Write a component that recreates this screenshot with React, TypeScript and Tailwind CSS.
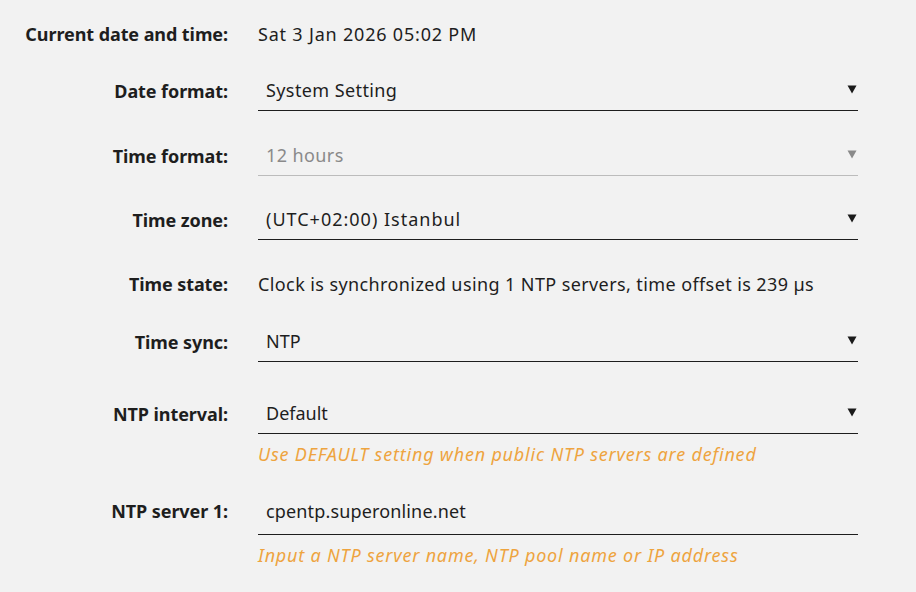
import React from "react";

const font = { fontFamily: '"Noto Sans", "Open Sans", sans-serif' };

function Arrow({ disabled }: { disabled?: boolean }) {
  return (
    <svg width="10" height="9" viewBox="0 0 10 9" className="mr-[1px]">
      <polygon points="0.5,0.5 9.5,0.5 5,8.5" fill={disabled ? "#8a8a8a" : "#1a1a1a"} />
    </svg>
  );
}

function Label({ children }: { children: React.ReactNode }) {
  return (
    <div className="w-[228px] shrink-0 text-right font-bold text-[18px] leading-6 text-[#1e1e1e] tracking-[-0.08px]">
      {children}
    </div>
  );
}

function SelectRow({
  label,
  value,
  disabled,
  className = "",
  valueClass = "tracking-[0.4px]",
}: {
  label: string;
  value: string;
  disabled?: boolean;
  className?: string;
  valueClass?: string;
}) {
  return (
    <div className={`flex items-center ${className}`}>
      <Label>{label}</Label>
      <div
        className={`ml-[30px] w-[600px] h-[41px] flex items-center justify-between pl-2 pb-[1px] border-b ${
          disabled ? "border-[#bcbcbc] text-[#8a8a8a]" : "border-[#1e1e1e] text-[#1e1e1e]"
        }`}
      >
        <span className={`text-[18px] leading-6 ${valueClass}`}>{value}</span>
        <Arrow disabled={disabled} />
      </div>
    </div>
  );
}

function Help({ children, className = "" }: { children: React.ReactNode; className?: string }) {
  return (
    <div className={`pl-[258px] text-[18px] leading-6 italic tracking-[0.8px] text-[#eea43f] ${className}`}>
      {children}
    </div>
  );
}

export default function App() {
  return (
    <div className="w-[916px] h-[592px] bg-[#f2f2f2] overflow-hidden" style={font}>
      <div className="flex flex-col pt-[22px]">
        {/* current date */}
        <div className="flex">
          <Label>Current date and time:</Label>
          <div className="ml-[30px] text-[18px] leading-6 tracking-[0.8px] text-[#1e1e1e]">
            Sat 3 Jan 2026 05:02 PM
          </div>
        </div>

        <SelectRow className="mt-6" label="Date format:" value="System Setting" />
        <SelectRow className="mt-6" label="Time format:" value="12 hours" disabled />
        <SelectRow
          className="mt-[23px]"
          label="Time zone:"
          value="(UTC+02:00) Istanbul"
          valueClass="tracking-[1px]"
        />

        {/* sync status */}
        <div className="flex mt-8">
          <Label>Time state:</Label>
          <div className="ml-[30px] text-[18px] leading-6 tracking-[0.4px] text-[#1e1e1e]">
            Clock is synchronized using 1 NTP servers, time offset is 239 µs
          </div>
        </div>

        <SelectRow className="mt-[25px]" label="Time sync:" value="NTP" valueClass="" />
        <SelectRow className="mt-[31px]" label="NTP interval:" value="Default" valueClass="" />
        <Help className="mt-2">Use DEFAULT setting when public NTP servers are defined</Help>

        {/* server input */}
        <div className="flex items-center mt-[25px]">
          <div className="pb-[4px]">
            <Label>NTP server 1:</Label>
          </div>
          <div className="ml-[30px] w-[600px] h-[44px] flex items-center pl-2 pb-[3px] border-b border-[#1e1e1e]">
            <span className="text-[18px] leading-6 tracking-[0.15px] text-[#1e1e1e]">cpentp.superonline.net</span>
          </div>
        </div>
        <Help className="mt-2">Input a NTP server name, NTP pool name or IP address</Help>
      </div>
    </div>
  );
}
